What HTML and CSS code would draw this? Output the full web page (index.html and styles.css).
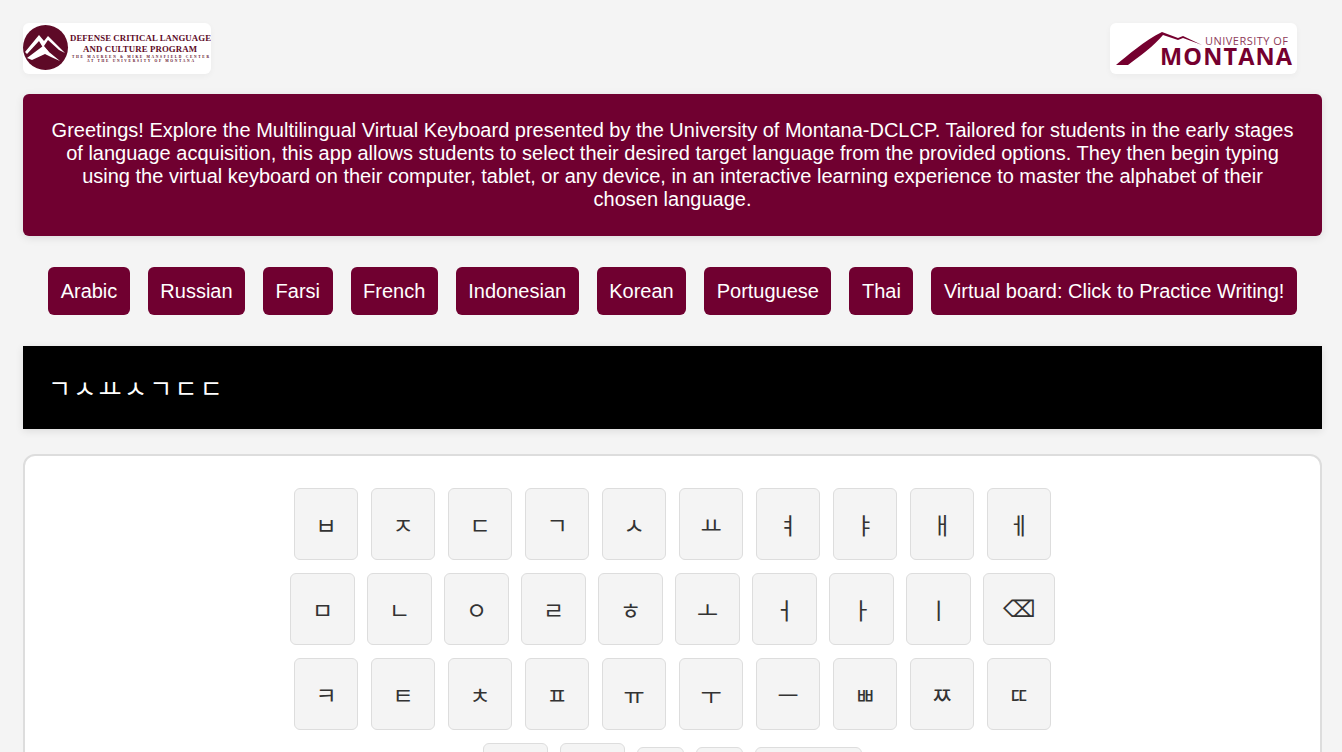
FILE: index.html
```html
<!DOCTYPE html>
<html lang="en">
<head>
  <meta charset="UTF-8">
  <title>Multilingual Virtual Keyboard</title>
  <link rel="stylesheet" href="styles.css">
</head>
<body>

  <div class="logos">
    <div class="logo-box">
      <svg width="188" height="51" viewBox="0 0 188 51">
        <circle cx="22.5" cy="24.5" r="22.5" fill="#5e0a27"/>
        <path d="M2 29 L16 12 L21 18 L25 13 L42 30 L36 27 L25 17 L21 23 L26 29 L22 28 L16 18 L4 31 Z" fill="#fff"/>
        <path d="M4 35 L20 23 L26 29 L37 38 L28 34 L22 31 L9 37 Z" fill="#fff"/>
        <text class="logo-a" x="47" y="18" textLength="141">DEFENSE CRITICAL LANGUAGE</text>
        <text class="logo-a" x="60" y="29" textLength="114">AND CULTURE PROGRAM</text>
        <text class="logo-b" x="49" y="34.5" textLength="137">THE MAUREEN &amp; MIKE MANSFIELD CENTER</text>
        <text class="logo-b" x="64" y="39" textLength="107">AT THE UNIVERSITY OF MONTANA</text>
      </svg>
    </div>
    <div class="logo-box logo-box-right">
      <svg width="187" height="51" viewBox="0 0 187 51">
        <path d="M6 42 C18 32 34 18 52 9 L68 15 L73 13 L92 22 L73 15 L68 17 L53 12 C44 23 30 33 18 42 Z" fill="#75002f"/>
        <text class="um-small" x="95" y="21.5" textLength="83">UNIVERSITY OF</text>
        <text class="um-big" x="50" y="42" textLength="132">MONTANA</text>
      </svg>
    </div>
  </div>

  <div class="intro">
    Greetings! Explore the Multilingual Virtual Keyboard presented by the University of Montana-DCLCP. Tailored for students in the early stages of language acquisition, this app allows students to select their desired target language from the provided options. They then begin typing using the virtual keyboard on their computer, tablet, or any device, in an interactive learning experience to master the alphabet of their chosen language.
  </div>

  <div class="lang-btns">
    <button>Arabic</button>
    <button>Russian</button>
    <button>Farsi</button>
    <button>French</button>
    <button>Indonesian</button>
    <button>Korean</button>
    <button>Portuguese</button>
    <button>Thai</button>
    <button>Virtual board: Click to Practice Writing!</button>
  </div>

  <div class="output">ㄱㅅㅛㅅㄱㄷㄷ</div>

  <div class="keyboard">
    <div class="key-row">
      <button class="key">ㅂ</button><button class="key">ㅈ</button><button class="key">ㄷ</button><button class="key">ㄱ</button><button class="key">ㅅ</button><button class="key">ㅛ</button><button class="key">ㅕ</button><button class="key">ㅑ</button><button class="key">ㅐ</button><button class="key">ㅔ</button>
    </div>
    <div class="key-row key-row-wide">
      <button class="key">ㅁ</button><button class="key">ㄴ</button><button class="key">ㅇ</button><button class="key">ㄹ</button><button class="key">ㅎ</button><button class="key">ㅗ</button><button class="key">ㅓ</button><button class="key">ㅏ</button><button class="key">ㅣ</button><button class="key key-back">⌫</button>
    </div>
    <div class="key-row">
      <button class="key">ㅋ</button><button class="key">ㅌ</button><button class="key">ㅊ</button><button class="key">ㅍ</button><button class="key">ㅠ</button><button class="key">ㅜ</button><button class="key">ㅡ</button><button class="key">ㅃ</button><button class="key">ㅉ</button><button class="key">ㄸ</button>
    </div>
    <div class="key-row key-row-wide">
      <button class="key"></button><button class="key"></button><button class="key key-small"></button><button class="key key-small"></button><button class="key key-small key-wide"></button>
    </div>
  </div>

</body>
</html>
```

FILE: styles.css
```css
html {
  height: 100%;
  overflow: hidden;
}
body {
  margin: 0;
  padding: 23px 20px 0 23px;
  background-color: #f4f4f4;
  font-family: "Liberation Sans", Arial, "Noto Sans CJK KR", sans-serif;
}
.logos {
  display: flex;
  justify-content: space-between;
  padding-right: 25px;
  margin-bottom: 20px;
}
.logo-box {
  width: 188px;
  height: 51px;
  background-color: #fff;
  border-radius: 6px;
  box-shadow: 0 2px 6px rgba(0,0,0,0.04);
}
.logo-box-right {
  width: 187px;
}
.logo-box svg {
  display: block;
}
.logo-a {
  font-family: "Liberation Serif", serif;
  font-size: 8.8px;
  font-weight: bold;
  fill: #5e0a27;
}
.logo-b {
  font-family: "Liberation Serif", serif;
  font-size: 3.6px;
  font-weight: bold;
  fill: #5e0a27;
}
.um-small {
  font-family: "Open Sans", sans-serif;
  font-size: 11px;
  fill: #8e3a59;
}
.um-big {
  font-family: "Open Sans", sans-serif;
  font-size: 23.5px;
  font-weight: bold;
  fill: #75002f;
}
.intro {
  background-color: #700030;
  color: #fff;
  font-size: 20px;
  line-height: 23px;
  text-align: center;
  padding: 25px 27px;
  border-radius: 6px;
  box-shadow: 0 2px 8px rgba(0,0,0,0.1);
}
.lang-btns {
  display: flex;
  justify-content: center;
  gap: 18px;
  margin: 31px 0;
}
.lang-btns button {
  height: 48px;
  padding: 0 12.5px;
  background-color: #700030;
  color: #fff;
  border: none;
  border-radius: 6px;
  font-family: inherit;
  font-size: 20px;
  cursor: pointer;
}
.output {
  height: 83px;
  box-sizing: border-box;
  padding: 29px 25px;
  background-color: #000;
  color: #fff;
  font-size: 25px;
  letter-spacing: 2.3px;
  line-height: 28px;
  box-shadow: 0 2px 8px rgba(0,0,0,0.1);
}
.keyboard {
  margin-top: 25px;
  padding: 32px 20px;
  background-color: #fff;
  border: 2px solid #ddd;
  border-radius: 12px;
}
.key-row {
  display: flex;
  justify-content: center;
  align-items: flex-end;
  gap: 13px;
  margin-bottom: 13px;
}
.key-row-wide {
  gap: 12px;
}
.key {
  width: 64px;
  height: 72px;
  padding: 0;
  background-color: #f4f4f4;
  color: #333;
  border: 1px solid #ddd;
  border-radius: 6px;
  font-family: inherit;
  font-size: 23px;
  cursor: pointer;
}
.key-row-wide .key {
  width: 65px;
}
.key-row-wide .key-back {
  width: 72px;
}
.key-row-wide .key-small {
  width: 47px;
  height: 68px;
}
.key-row-wide .key-wide {
  width: 107px;
}
```
